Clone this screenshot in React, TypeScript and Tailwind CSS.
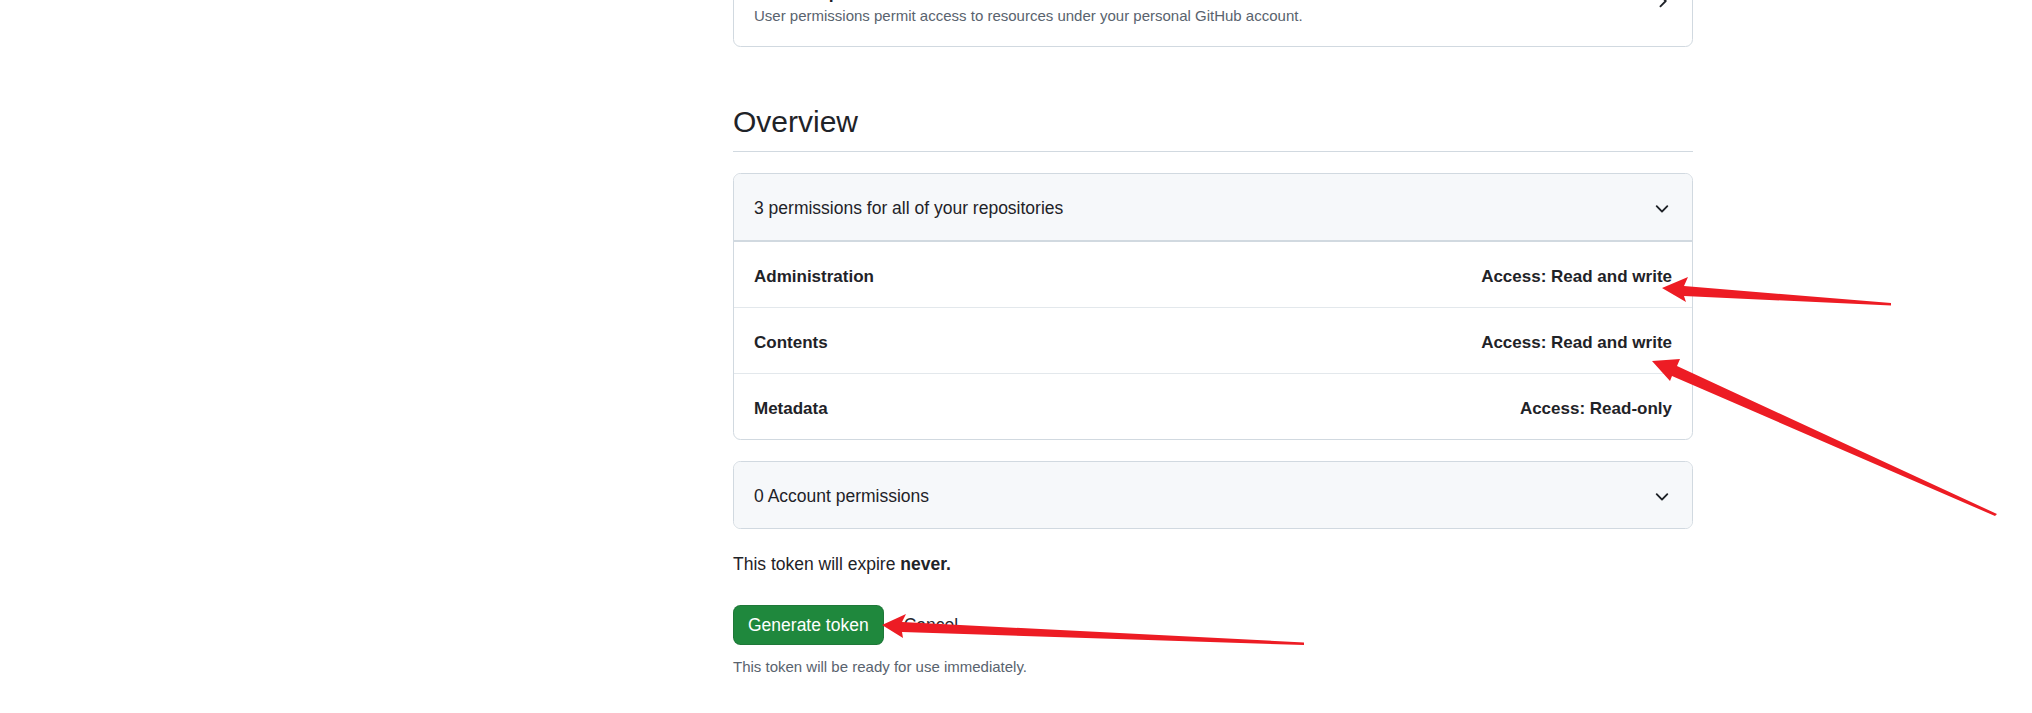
import React from "react";

const ChevronDown = () => (
  <svg width="20" height="20" viewBox="0 0 16 16" fill="#1f2328" aria-hidden="true">
    <path d="M12.78 5.22a.749.749 0 0 1 0 1.06l-4.25 4.25a.749.749 0 0 1-1.06 0L3.22 6.28a.749.749 0 1 1 1.06-1.06L8 8.939l3.72-3.719a.749.749 0 0 1 1.06 0Z" />
  </svg>
);

const ChevronRight = () => (
  <svg width="20" height="20" viewBox="0 0 16 16" fill="#1f2328" aria-hidden="true">
    <path d="M6.22 3.22a.75.75 0 0 1 1.06 0l4.25 4.25a.75.75 0 0 1 0 1.06l-4.25 4.25a.751.751 0 0 1-1.042-.018.751.751 0 0 1-.018-1.042L9.94 8 6.22 4.28a.75.75 0 0 1 0-1.06Z" />
  </svg>
);

const rows = [
  { name: "Administration", access: "Access: Read and write" },
  { name: "Contents", access: "Access: Read and write" },
  { name: "Metadata", access: "Access: Read-only" },
];

export default function App() {
  return (
    <div className="relative w-[2032px] h-[713px] overflow-hidden bg-white text-[#1f2328] font-['Liberation_Sans',Arial,sans-serif]">
      <div className="flex">
        <div className="w-[733px] shrink-0" />
        <div className="w-[960px] shrink-0">
          {/* Account permissions card (cut off at top) */}
          <div className="-mt-[45px] h-[92px] border border-[#d1d9e0] rounded-[7.5px] px-[20px] flex items-center justify-between">
            <div className="pt-[4px]">
              <div className="text-[17.5px] leading-[26px] font-semibold">Account permissions</div>
              <div className="text-[15px] leading-[22px] text-[#59636e]">
                User permissions permit access to resources under your personal GitHub account.
              </div>
            </div>
            <ChevronRight />
          </div>

          {/* Overview heading */}
          <div className="mt-[56px] pb-[10px] border-b border-[#d1d9e0]">
            <h2 className="text-[30px] leading-[38px] font-normal">Overview</h2>
          </div>

          {/* Repository permissions */}
          <div className="mt-[21px] border border-[#d1d9e0] rounded-[7.5px] overflow-hidden">
            <div className="h-[68px] pt-[3px] bg-[#f6f8fa] border-b-2 border-[#d1d9e0] px-[20px] flex items-center justify-between">
              <span className="text-[17.5px]">3 permissions for all of your repositories</span>
              <ChevronDown />
            </div>
            {rows.map((r, i) => (
              <div
                key={r.name}
                className={
                  i < rows.length - 1
                    ? "h-[66px] pt-[4px] border-b border-[#e3e8ec] px-[20px] flex items-center justify-between text-[17px] font-semibold"
                    : "h-[65px] pt-[4px] px-[20px] flex items-center justify-between text-[17px] font-semibold"
                }
              >
                <span>{r.name}</span>
                <span>{r.access}</span>
              </div>
            ))}
          </div>

          {/* Account permissions */}
          <div className="mt-[21px] border border-[#d1d9e0] rounded-[7.5px] overflow-hidden">
            <div className="h-[66px] pt-[3px] bg-[#f6f8fa] px-[20px] flex items-center justify-between">
              <span className="text-[17.5px]">0 Account permissions</span>
              <ChevronDown />
            </div>
          </div>

          <p className="mt-[22px] text-[17.5px] leading-[26px]">
            This token will expire <strong className="font-semibold">never.</strong>
          </p>

          <div className="mt-[28px] flex items-center gap-[20px]">
            <button className="h-[40px] px-[14px] rounded-[7.5px] bg-[#1f883d] border border-[rgba(31,35,40,0.15)] text-white text-[17.5px] font-medium">
              Generate token
            </button>
            <span className="text-[17.5px] text-[#25292e]">Cancel</span>
          </div>

          <p className="mt-[11px] text-[15px] leading-[22px] text-[#59636e]">
            This token will be ready for use immediately.
          </p>
        </div>
      </div>

      {/* Red annotation arrows */}
      <svg
        className="absolute top-0 left-0 pointer-events-none"
        width="2032"
        height="713"
        viewBox="0 0 2032 713"
      >
        <polygon
          fill="#ed1c24"
          points="1662,288 1688,277 1684,286 1891,303 1891,305.5 1684,296 1686,302"
        />
        <polygon
          fill="#ed1c24"
          points="1652,361 1680,359 1677,366 1997,514 1995,516 1672,376 1670,381"
        />
        <polygon
          fill="#ed1c24"
          points="882,625 906,614 902,622 1304,642.5 1304,645 902,632 903,638"
        />
      </svg>
    </div>
  );
}
